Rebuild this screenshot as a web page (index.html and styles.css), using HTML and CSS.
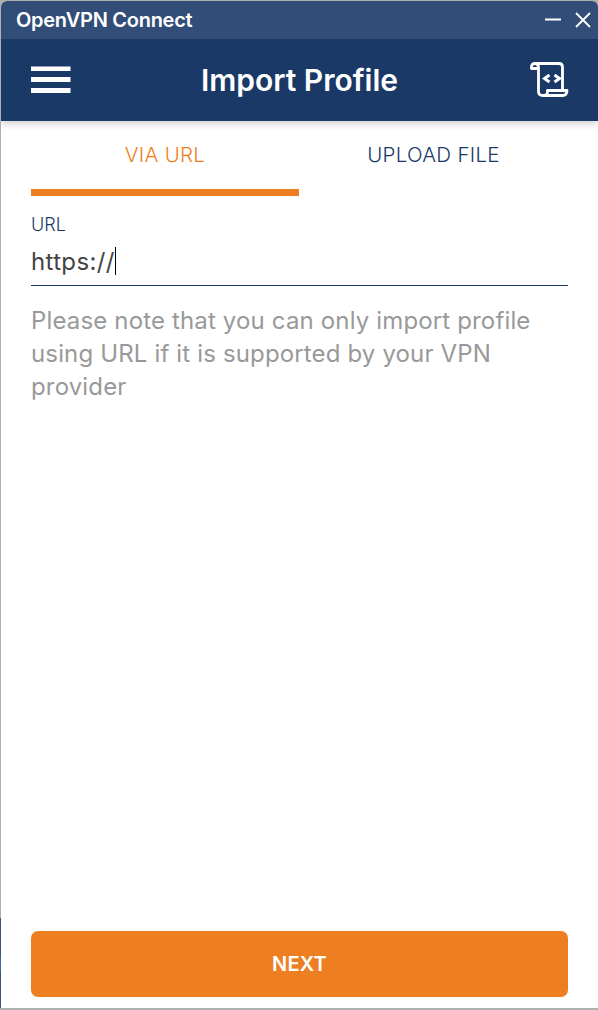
FILE: index.html
```html
<!DOCTYPE html>
<html lang="en">
<head>
<meta charset="utf-8">
<title>OpenVPN Connect</title>
<link rel="stylesheet" href="styles.css">
</head>
<body>
<div class="window">
  <header class="titlebar">
    <span class="app-name">OpenVPN Connect</span>
    <svg class="controls" width="48" height="20" viewBox="0 0 48 20" fill="none" stroke="#fff" stroke-width="1.8"><path d="M1 9.5H17M32 3L46 17M46 3L32 17"/></svg>
  </header>
  <div class="appbar">
    <svg class="menu" width="40" height="28" viewBox="0 0 40 28" fill="#fff"><path d="M0 0.5H39.5V5H0zM0 11H39.5V16H0zM0 22H39.5V27H0z"/></svg>
    <h1 class="title">Import Profile</h1>
    <svg class="log" width="40" height="36" viewBox="0 0 40 36" fill="none" stroke="#fff" stroke-width="2.8" stroke-linejoin="round"><path d="M9.500 6.500H2.500V4.500Q2.500 1.500 6 1.500H30Q33.500 1.500 33.500 5V28M6 1.500Q9.500 1.500 9.500 6V29.500Q9.500 33.500 14 33.500H33.500Q38 33.500 38 28.500H18.500V30Q18.500 33.500 14 33.500"/><path d="M20.500 13L15.500 16.500L20.500 20M25.500 13L30.500 16.500L25.500 20" stroke-width="3" stroke-linejoin="miter"/></svg>
  </div>
  <nav class="tabs">
    <span class="tab tab-active">VIA URL</span>
    <span class="tab">UPLOAD FILE</span>
  </nav>
  <main class="form">
    <label class="label">URL</label>
    <div class="field"><span class="value">https://</span><span class="caret"></span></div>
    <p class="note">Please note that you can only import profile using URL if it is supported by your VPN provider</p>
  </main>
  <button class="next">NEXT</button>
</div>
</body>
</html>
```
FILE: styles.css
```css
* { box-sizing: border-box; }
body { margin: 0; font-family: Inter, sans-serif; background: #b0b0a8; }
.window {
  height: 1010px; display: flex; flex-direction: column;
  background: linear-gradient(#fff, #fff) padding-box, linear-gradient(#b0b0b0 918px, #3f5578 918px, #3f5578 958px, #3b6ba5 958px, #3b6ba5 972px, #3f5578 972px, #3f5578 1008px, #b0b0b0 1008px) border-box;
  border: solid transparent; border-width: 1px 0 2px 1px; border-radius: 7px 7px 0 0;
}
.titlebar { flex: none; height: 38px; background: #314d78; border-radius: 6px 6px 0 0; display: flex; align-items: center; justify-content: space-between; padding: 0 6px 0 15px; color: #fff; }
.app-name { font-size: 20px; font-weight: 600; letter-spacing: -0.28px; }
.appbar { flex: none; height: 82px; background: #1a3967; display: flex; align-items: center; justify-content: space-between; padding: 0 30px; color: #fff; box-shadow: 0 2px 8px rgba(0,0,0,.22); clip-path: inset(0 0 -12px 0); }
.title { margin: 0 1px 0 0; font-size: 30px; font-weight: 600; }
.log { margin-right: -1px; }
.tabs { display: grid; grid-template-columns: 268px 1fr; height: 75px; margin: 0 30px; }
.tab { text-align: center; padding-top: 21px; font-size: 20.5px; line-height: 26px; font-weight: 350; letter-spacing: .3px; color: #1a3967; }
.tab-active { color: #ed7f22; border-bottom: 7px solid #ed7f22; }
.form { flex: 1; padding: 18px 30px 0; }
.label { display: block; font-size: 18px; line-height: 22px; font-weight: 350; color: #1a3967; }
.field { display: flex; align-items: center; height: 50px; padding-top: 1px; border-bottom: 1px solid #1a3967; font-size: 24px; font-weight: 400; letter-spacing: .35px; color: #444; }
.caret { width: 1px; height: 28px; background: #000; }
.note { margin: 18px 0 0; font-size: 24px; line-height: 33px; letter-spacing: .15px; color: #999; }
.next { height: 66px; margin: 0 30px 11px; border: 0; border-radius: 7px; background: #ed7f22; color: #fff; font: 600 20px Inter, sans-serif; letter-spacing: .2px; }
```
